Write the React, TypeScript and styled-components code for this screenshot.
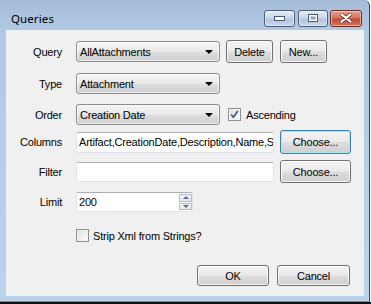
import React from 'react';
import styled, { createGlobalStyle } from 'styled-components';

const GlobalStyle = createGlobalStyle`
  html, body {
    margin: 0;
    padding: 0;
    background: #ffffff;
    overflow: hidden;
  }
  * { box-sizing: border-box; }
`;

const Screen = styled.div`
  width: 371px;
  height: 304px;
  display: flex;
  flex-direction: column;
  background: #ffffff;
`;

const Window = styled.div`
  width: 370px;
  height: 302px;
  display: flex;
  flex-direction: column;
  padding: 0 5px 5px 6px;
  background: linear-gradient(to bottom, #a4bcd8 0px, #b2c9e3 30px, #bcd3ec 100%);
  border-right: 1px solid #3d4650;
  border-bottom: 1px solid #2aa7d8;
  border-top-right-radius: 6px;
`;

const Backdrop = styled.div`
  height: 2px;
  background: #111111;
`;

const TitleBar = styled.div`
  height: 30px;
  display: flex;
  align-items: center;
  padding: 6px 2px 0 5px;
`;

const Title = styled.span`
  flex: 1;
  font-family: "Noto Sans", "Open Sans", sans-serif;
  font-size: 11.5px;
  color: #000000;
  letter-spacing: 0.1px;
`;

const CaptionGroup = styled.div`
  display: flex;
  gap: 3px;
`;

const CaptionButton = styled.div<{ $close?: boolean; $w: number }>`
  width: ${(p) => p.$w}px;
  height: 17px;
  display: flex;
  align-items: center;
  justify-content: center;
  border: 1px solid ${(p) => (p.$close ? '#6b2a22' : '#4e5e74')};
  border-radius: 3px;
  background: ${(p) =>
    p.$close
      ? 'linear-gradient(to bottom, #e3a394 0%, #d5735f 45%, #c44a34 55%, #d2745c 100%)'
      : 'linear-gradient(to bottom, #e4ecf6 0%, #c9d8ea 45%, #b0c5df 55%, #c7d8ec 100%)'};
  box-shadow: inset 0 0 0 1px rgba(255, 255, 255, 0.45);
`;

const Client = styled.div`
  flex: 1;
  display: flex;
  flex-direction: column;
  background: #f0f0f0;
  font-family: "Liberation Sans", Arial, sans-serif;
  font-size: 11px;
  letter-spacing: -0.2px;
  color: #000000;
`;

const Row = styled.div<{ $mt: number; $h: number }>`
  display: flex;
  align-items: center;
  margin-top: ${(p) => p.$mt}px;
  height: ${(p) => p.$h}px;
`;

const Label = styled.span`
  width: 56px;
  margin-right: 14px;
  text-align: right;
`;

const Combo = styled.div`
  width: 144px;
  height: 21px;
  display: flex;
  align-items: center;
  padding: 0 4px 0 3px;
  border: 1px solid #8a8a8a;
  border-radius: 3px;
  background: linear-gradient(to bottom, #f3f3f3 0%, #ebebeb 48%, #dddddd 52%, #d0d0d0 100%);
  box-shadow: inset 0 0 0 1px rgba(255, 255, 255, 0.7);
`;

const ComboText = styled.span`
  flex: 1;
  white-space: nowrap;
  overflow: hidden;
`;

const Arrow = styled.span`
  width: 0;
  height: 0;
  margin-right: 2px;
  border-left: 4px solid transparent;
  border-right: 4px solid transparent;
  border-top: 4px solid #000000;
`;

const Button = styled.div<{ $w: number; $h?: number; $focus?: boolean; $ml: number }>`
  width: ${(p) => p.$w}px;
  height: ${(p) => p.$h ?? 23}px;
  margin-left: ${(p) => p.$ml}px;
  display: flex;
  align-items: center;
  justify-content: center;
  border: 1px solid ${(p) => (p.$focus ? '#3c7fb1' : '#707070')};
  border-radius: 3px;
  background: linear-gradient(to bottom, #f2f2f2 0%, #ebebeb 48%, #dddddd 52%, #cfcfcf 100%);
  box-shadow: inset 0 0 0 1px ${(p) => (p.$focus ? '#a6e4f7' : 'rgba(255,255,255,0.8)')};
`;

const TextBox = styled.div<{ $w: number; $h: number }>`
  width: ${(p) => p.$w}px;
  height: ${(p) => p.$h}px;
  display: flex;
  align-items: center;
  padding-left: 2px;
  background: #ffffff;
  border: 1px solid #e2e3ea;
  border-top-color: #abadb3;
  border-radius: 2px;
  white-space: nowrap;
  overflow: hidden;
`;

const TextValue = styled.span`
  flex: 1;
  overflow: hidden;
  white-space: nowrap;
`;

const Spinner = styled.div`
  width: 13px;
  height: 100%;
  display: flex;
  flex-direction: column;
  gap: 1px;
  padding: 1px 0;
`;

const SpinPart = styled.div<{ $up?: boolean }>`
  flex: 1;
  display: flex;
  align-items: center;
  justify-content: center;
  border: 1px solid #b6bcc6;
  background: linear-gradient(to bottom, #f7f7f7, #e4e6ea);
  &::after {
    content: '';
    border-left: 3px solid transparent;
    border-right: 3px solid transparent;
    ${(p) => (p.$up ? 'border-bottom: 3px solid #4f6d9e;' : 'border-top: 3px solid #4f6d9e;')}
  }
`;

const Check = styled.div<{ $ml: number }>`
  width: 13px;
  height: 13px;
  margin-left: ${(p) => p.$ml}px;
  display: flex;
  align-items: center;
  justify-content: center;
  border: 1px solid #8e8f8f;
  background: linear-gradient(135deg, #d9dadc 0%, #f2f2f2 60%, #fbfbfb 100%);
  box-shadow: inset 0 0 0 1px #f4f4f4;
`;

const CheckLabel = styled.span<{ $ml: number }>`
  margin-left: ${(p) => p.$ml}px;
`;

const Footer = styled.div`
  display: flex;
  justify-content: flex-end;
  align-items: center;
  gap: 8px;
  margin-top: 21px;
  padding-right: 14px;
`;

export default function App() {
  return (
    <Screen>
      <GlobalStyle />
      <Window>
        <TitleBar>
          <Title>Queries</Title>
          <CaptionGroup>
            <CaptionButton $w={31}>
              <svg width="11" height="5" viewBox="0 0 11 5">
                <rect x="0.5" y="0.5" width="10" height="4" fill="#ffffff" stroke="#4a5a70" />
              </svg>
            </CaptionButton>
            <CaptionButton $w={30}>
              <svg width="10" height="8" viewBox="0 0 10 8">
                <rect x="0.5" y="0.5" width="9" height="7" fill="#ffffff" stroke="#4a5a70" />
                <rect x="2.5" y="2.5" width="5" height="3" fill="#8aa0bc" />
              </svg>
            </CaptionButton>
            <CaptionButton $close $w={32} style={{ marginLeft: -1 }}>
              <svg width="12" height="10" viewBox="0 0 12 10">
                <path d="M1 1 L11 9 M11 1 L1 9" stroke="#5b2318" strokeWidth="3.6" strokeLinecap="round" />
                <path d="M1.5 1.3 L10.5 8.7 M10.5 1.3 L1.5 8.7" stroke="#ffffff" strokeWidth="2.2" strokeLinecap="round" />
              </svg>
            </CaptionButton>
          </CaptionGroup>
        </TitleBar>
        <Client>
          <Row $mt={10} $h={23}>
            <Label>Query</Label>
            <Combo>
              <ComboText>AllAttachments</ComboText>
              <Arrow />
            </Combo>
            <Button $w={47} $ml={6}>Delete</Button>
            <Button $w={47} $ml={7}>New...</Button>
          </Row>
          <Row $mt={10} $h={21}>
            <Label>Type</Label>
            <Combo>
              <ComboText>Attachment</ComboText>
              <Arrow />
            </Combo>
          </Row>
          <Row $mt={10} $h={21}>
            <Label>Order</Label>
            <Combo>
              <ComboText>Creation Date</ComboText>
              <Arrow />
            </Combo>
            <Check $ml={8}>
              <svg width="9" height="9" viewBox="0 0 9 9">
                <path d="M1.2 4.6 L3.4 7.2 L7.8 1" fill="none" stroke="#3b4f8a" strokeWidth="1.6" />
              </svg>
            </Check>
            <CheckLabel $ml={5}>Ascending</CheckLabel>
          </Row>
          <Row $mt={5} $h={24}>
            <Label>Columns</Label>
            <TextBox $w={198} $h={21}>
              <TextValue>Artifact,CreationDate,Description,Name,S</TextValue>
            </TextBox>
            <Button $w={71} $h={24} $ml={6} $focus>Choose...</Button>
          </Row>
          <Row $mt={6} $h={23}>
            <Label>Filter</Label>
            <TextBox $w={198} $h={20} />
            <Button $w={71} $ml={6}>Choose...</Button>
          </Row>
          <Row $mt={9} $h={20}>
            <Label>Limit</Label>
            <TextBox $w={117} $h={20}>
              <TextValue>200</TextValue>
              <Spinner>
                <SpinPart $up />
                <SpinPart />
              </Spinner>
            </TextBox>
          </Row>
          <Row $mt={15} $h={17}>
            <Check $ml={70} />
            <CheckLabel $ml={4}>Strip Xml from Strings?</CheckLabel>
          </Row>
          <Footer>
            <Button $w={72} $h={21} $ml={0}>OK</Button>
            <Button $w={73} $h={21} $ml={0}>Cancel</Button>
          </Footer>
        </Client>
      </Window>
      <Backdrop />
    </Screen>
  );
}
